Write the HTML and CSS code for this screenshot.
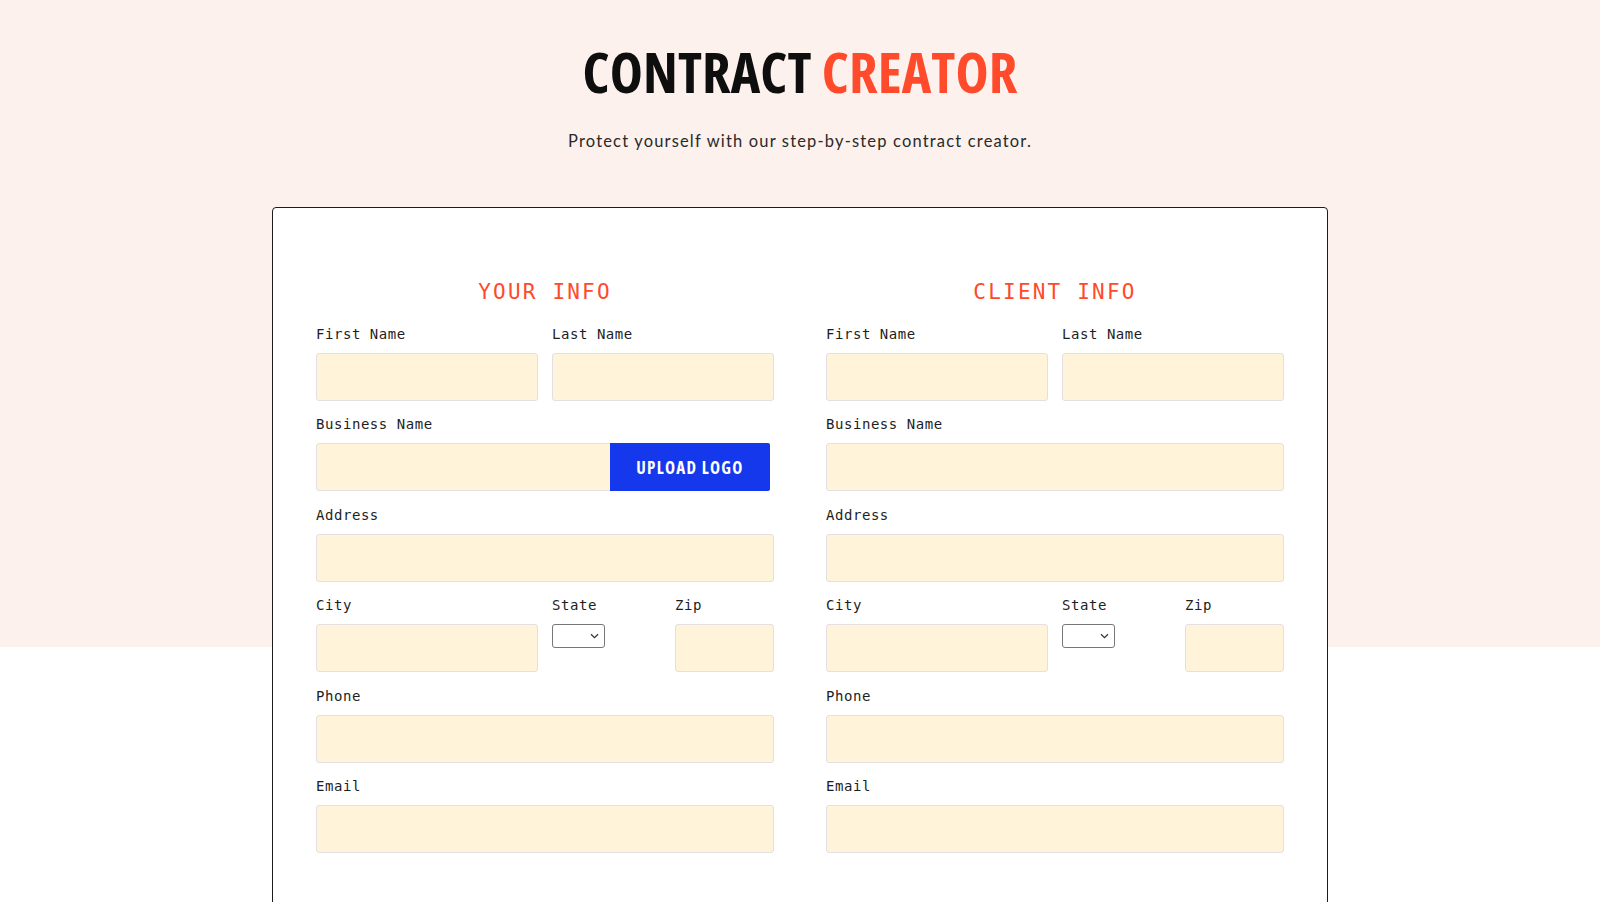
FILE: index.html
```html
<!DOCTYPE html>
<html lang="en">
<head>
<meta charset="utf-8">
<title>Contract Creator</title>
<link rel="stylesheet" href="styles.css">
</head>
<body>
<main class="page">
  <header class="hero">
    <h1 class="title">CONTRACT <span class="accent">CREATOR</span></h1>
    <p class="subtitle">Protect yourself with our step-by-step contract creator.</p>
  </header>

  <section class="card">
    <form class="columns">
      <div class="col">
        <h2 class="col-title">YOUR INFO</h2>
        <div class="row halves">
          <div class="field"><label class="label">First Name</label><input class="input" type="text"></div>
          <div class="field"><label class="label">Last Name</label><input class="input" type="text"></div>
        </div>
        <div class="field">
          <label class="label">Business Name</label>
          <div class="input-wrap">
            <input class="input" type="text">
            <button class="upload" type="button">UPLOAD LOGO</button>
          </div>
        </div>
        <div class="field"><label class="label">Address</label><input class="input" type="text"></div>
        <div class="row halves">
          <div class="field"><label class="label">City</label><input class="input" type="text"></div>
          <div class="state-zip">
            <div class="field"><label class="label">State</label>
              <div class="select-wrap">
                <select class="select"></select>
                <svg class="chevron" width="9" height="6" viewBox="0 0 9 6"><path d="M1 1.2 L4.5 4.6 L8 1.2" fill="none" stroke="#333" stroke-width="1.2"/></svg>
              </div>
            </div>
            <div class="field zip"><label class="label">Zip</label><input class="input" type="text"></div>
          </div>
        </div>
        <div class="field"><label class="label">Phone</label><input class="input" type="text"></div>
        <div class="field"><label class="label">Email</label><input class="input" type="text"></div>
      </div>

      <div class="col">
        <h2 class="col-title">CLIENT INFO</h2>
        <div class="row halves">
          <div class="field"><label class="label">First Name</label><input class="input" type="text"></div>
          <div class="field"><label class="label">Last Name</label><input class="input" type="text"></div>
        </div>
        <div class="field"><label class="label">Business Name</label><input class="input" type="text"></div>
        <div class="field"><label class="label">Address</label><input class="input" type="text"></div>
        <div class="row halves">
          <div class="field"><label class="label">City</label><input class="input" type="text"></div>
          <div class="state-zip">
            <div class="field"><label class="label">State</label>
              <div class="select-wrap">
                <select class="select"></select>
                <svg class="chevron" width="9" height="6" viewBox="0 0 9 6"><path d="M1 1.2 L4.5 4.6 L8 1.2" fill="none" stroke="#333" stroke-width="1.2"/></svg>
              </div>
            </div>
            <div class="field zip"><label class="label">Zip</label><input class="input" type="text"></div>
          </div>
        </div>
        <div class="field"><label class="label">Phone</label><input class="input" type="text"></div>
        <div class="field"><label class="label">Email</label><input class="input" type="text"></div>
      </div>
    </form>
  </section>
</main>
</body>
</html>
```
FILE: styles.css
```css
* { box-sizing: border-box; }

html, body { margin: 0; padding: 0; }

body {
  background: #ffffff;
  color: #1e1e1e;
  font-family: "DejaVu Sans Mono", monospace;
}

.page {
  background: linear-gradient(to bottom, #fcf1ec 0, #fcf1ec 647px, #ffffff 647px);
  min-height: 902px;
  overflow: hidden;
}

.hero {
  padding-top: 39px;
  text-align: center;
}

.title {
  margin: 0;
  font-family: "Open Sans", sans-serif;
  font-weight: 700;
  font-stretch: 75%;
  font-size: 56px;
  line-height: 64px;
  color: #0e0e0e;
  letter-spacing: 0.1px;
}

.accent { color: #ff4b2b; }

.subtitle {
  margin: 26px 0 0;
  font-family: "Lato", sans-serif;
  font-size: 16.5px;
  line-height: 24px;
  letter-spacing: 1.17px;
  color: #2a2a2a;
}

.card {
  width: 1056px;
  margin: 54px auto 0;
  background: #ffffff;
  border: 1.5px solid #1c1c1c;
  border-radius: 4px;
  padding: 69.5px 43px 60px;
}

.columns {
  display: grid;
  grid-template-columns: 1fr 1fr;
  column-gap: 52px;
}

.col-title {
  margin: 0 0 19px;
  text-align: center;
  font-family: "DejaVu Sans Mono", monospace;
  font-weight: 400;
  font-size: 21px;
  line-height: 28px;
  letter-spacing: 2.2px;
  color: #ff4a2a;
}

.row.halves {
  display: grid;
  grid-template-columns: 1fr 1fr;
  column-gap: 14px;
}

.field {
  margin-bottom: 14.5px;
}

.row .field,
.state-zip .field { margin-bottom: 0; }

.row { margin-bottom: 14.5px; }

.label {
  display: block;
  margin-bottom: 10px;
  font-family: "DejaVu Sans Mono", monospace;
  font-size: 14px;
  line-height: 18px;
  letter-spacing: 0.55px;
  color: #1e1e1e;
}

.input {
  display: block;
  width: 100%;
  height: 48px;
  margin: 0;
  padding: 0 12px;
  background: #fff4d9;
  border: 1px solid #e3dfe2;
  border-radius: 3px;
  outline: none;
  font: 14px "DejaVu Sans Mono", monospace;
}

.input-wrap {
  position: relative;
  margin-right: 4px;
}

.upload {
  position: absolute;
  top: 0;
  right: 0;
  width: 160px;
  height: 48px;
  margin: 0;
  padding: 0;
  border: none;
  border-radius: 0 2px 2px 0;
  background: #1538ec;
  color: #ffffff;
  font-family: "Open Sans", sans-serif;
  font-weight: 700;
  font-stretch: 75%;
  font-size: 17px;
  letter-spacing: 1.3px;
  cursor: pointer;
}

.state-zip {
  display: flex;
  justify-content: space-between;
  align-items: flex-start;
}

.zip { width: 99px; }

.select-wrap {
  position: relative;
  width: 53px;
  height: 24px;
}

.select {
  display: block;
  width: 53px;
  height: 24px;
  margin: 0;
  -webkit-appearance: none;
  appearance: none;
  background: #ffffff;
  border: 1px solid #767676;
  border-radius: 3px;
}

.chevron {
  position: absolute;
  right: 6px;
  top: 9px;
  pointer-events: none;
}
```
